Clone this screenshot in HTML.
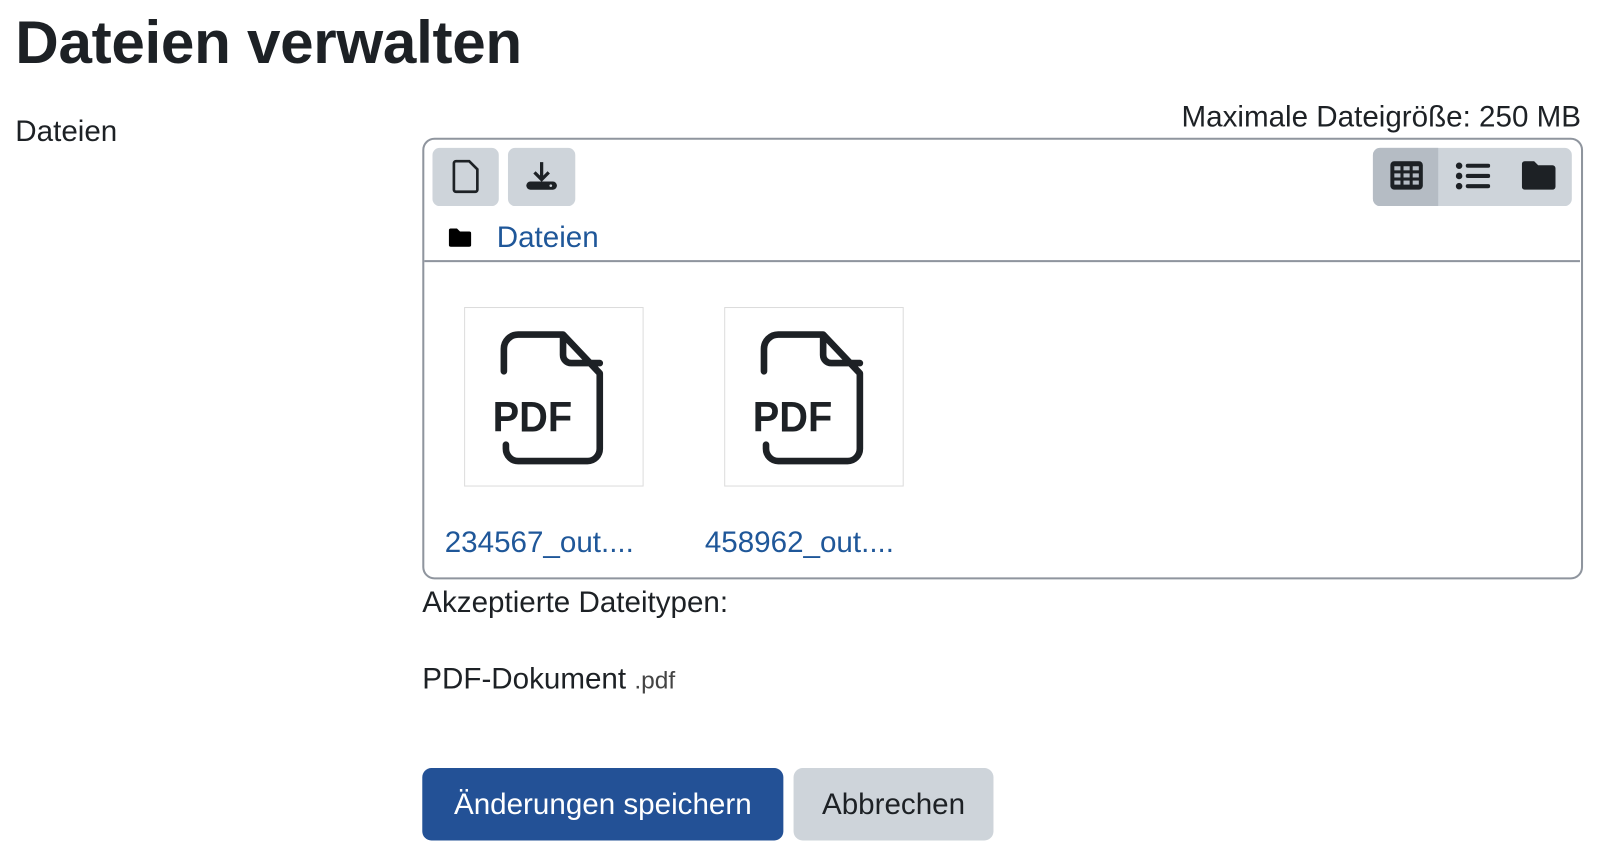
<!DOCTYPE html>
<html><head><meta charset="utf-8"><style>
body{margin:0;width:1600px;height:858px;background:#fff;font-family:"Liberation Sans",sans-serif;color:#1d2125;position:relative;overflow:hidden}
#w{position:absolute;left:0;top:0;width:1568px;height:840px;transform:scale(1.02);transform-origin:0 0}
.a{position:absolute;white-space:nowrap}
h1{position:absolute;left:15px;top:8px;margin:0;font-size:59px;font-weight:bold;letter-spacing:-0.3px}
.t{font-size:29px}
.box{position:absolute;left:414px;top:135px;width:1134px;height:429px;border:2px solid #8f959e;border-radius:12px}
.btn{position:absolute;background:#ced4da;border-radius:7px}
.thumb{position:absolute;top:301px;width:174px;height:174px;border:1px solid #dcdcdc}
.link{color:#1f5799}
</style></head><body><div id="w">
<h1>Dateien verwalten</h1>
<div class="a t" style="left:15px;top:113px">Dateien</div>
<div class="a t" style="right:18px;top:99px">Maximale Dateigröße: 250 MB</div>
<div class="box"></div>
<div class="btn" style="left:424px;top:145px;width:65px;height:57px"></div>
<div class="btn" style="left:498px;top:145px;width:66px;height:57px"></div>
<svg class="a" style="left:443px;top:156px" width="28" height="34" viewBox="0 0 28 34"><path d="M4 2h13l8 8v20a2 2 0 0 1-2 2H4a2 2 0 0 1-2-2V4a2 2 0 0 1 2-2z" fill="none" stroke="#1d2125" stroke-width="2.6"/></svg>
<svg class="a" style="left:514px;top:158px" width="34" height="30" viewBox="0 0 34 30"><path d="M17 1v17M10 11l7 7 7-7" fill="none" stroke="#1d2125" stroke-width="3.2"/><rect x="2" y="20" width="30" height="8" rx="4" fill="#1d2125"/><circle cx="26" cy="24" r="1.3" fill="#ced4da"/></svg>
<div class="btn" style="left:1346px;top:145px;width:195px;height:57px"></div>
<div class="a" style="left:1346px;top:145px;width:64px;height:57px;background:#b5bcc4;border-radius:7px 0 0 7px"></div>
<svg class="a" style="left:1363px;top:158px" width="32" height="28" viewBox="0 0 32 28"><rect x="0" y="0" width="32" height="28" rx="4" fill="#1d2125"/><g fill="#b5bcc4"><rect x="4" y="5" width="6" height="4"/><rect x="13" y="5" width="6" height="4"/><rect x="22" y="5" width="6" height="4"/><rect x="4" y="12" width="6" height="4"/><rect x="13" y="12" width="6" height="4"/><rect x="22" y="12" width="6" height="4"/><rect x="4" y="19" width="6" height="4"/><rect x="13" y="19" width="6" height="4"/><rect x="22" y="19" width="6" height="4"/></g></svg>
<svg class="a" style="left:1427px;top:159px" width="34" height="27" viewBox="0 0 34 27"><g fill="#1d2125"><circle cx="3.5" cy="3.5" r="3.2"/><circle cx="3.5" cy="13.5" r="3.2"/><circle cx="3.5" cy="23.5" r="3.2"/><rect x="10" y="1.5" width="24" height="4" rx="2"/><rect x="10" y="11.5" width="24" height="4" rx="2"/><rect x="10" y="21.5" width="24" height="4" rx="2"/></g></svg>
<svg class="a" style="left:1492px;top:158px" width="33" height="28" viewBox="0 0 33 28"><path d="M3 0h9l4 4h14a3 3 0 0 1 3 3v18a3 3 0 0 1-3 3H3a3 3 0 0 1-3-3V3a3 3 0 0 1 3-3z" fill="#1d2125"/></svg>
<svg class="a" style="left:440px;top:224px" width="22" height="18" viewBox="0 0 22 18"><path d="M2 0h6l3 3h9a2 2 0 0 1 2 2v11a2 2 0 0 1-2 2H2a2 2 0 0 1-2-2V2a2 2 0 0 1 2-2z" fill="#000"/></svg>
<div class="a t link" style="left:487px;top:217px">Dateien</div>
<div class="a" style="left:416px;top:255px;width:1133px;height:2px;background:#8f959e"></div>
<div class="thumb" style="left:455px"></div>
<div class="thumb" style="left:710px"></div>
<svg class="a" style="left:482px;top:324px" width="120" height="132" viewBox="0 0 120 132"><path d="M12 40V18a14 14 0 0 1 14-14h44l36 38v74a12 12 0 0 1-12 12H26a12 12 0 0 1-12-12v-4M70 4v20a8 8 0 0 0 8 8h28" fill="none" stroke="#1d2125" stroke-width="6.5" stroke-linecap="round" stroke-linejoin="round"/><text x="1" y="99" font-family="Liberation Sans" font-weight="bold" font-size="42" fill="#1d2125" textLength="78" lengthAdjust="spacingAndGlyphs">PDF</text></svg>
<svg class="a" style="left:737px;top:324px" width="120" height="132" viewBox="0 0 120 132"><path d="M12 40V18a14 14 0 0 1 14-14h44l36 38v74a12 12 0 0 1-12 12H26a12 12 0 0 1-12-12v-4M70 4v20a8 8 0 0 0 8 8h28" fill="none" stroke="#1d2125" stroke-width="6.5" stroke-linecap="round" stroke-linejoin="round"/><text x="1" y="99" font-family="Liberation Sans" font-weight="bold" font-size="42" fill="#1d2125" textLength="78" lengthAdjust="spacingAndGlyphs">PDF</text></svg>
<div class="a t link" style="left:436px;top:516px">234567_out....</div>
<div class="a t link" style="left:691px;top:516px">458962_out....</div>
<div class="a t" style="left:414px;top:575px">Akzeptierte Dateitypen:</div>
<div class="a t" style="left:414px;top:650px">PDF-Dokument <span style="font-size:24px;color:#444">.pdf</span></div>
<div class="a t" style="left:414px;top:753px;width:354px;height:71px;background:#235196;color:#fff;border-radius:9px;text-align:center;line-height:73px">Änderungen speichern</div>
<div class="a t" style="left:778px;top:753px;width:196px;height:71px;background:#ced4da;border-radius:9px;text-align:center;line-height:73px">Abbrechen</div>
</div></body></html>
